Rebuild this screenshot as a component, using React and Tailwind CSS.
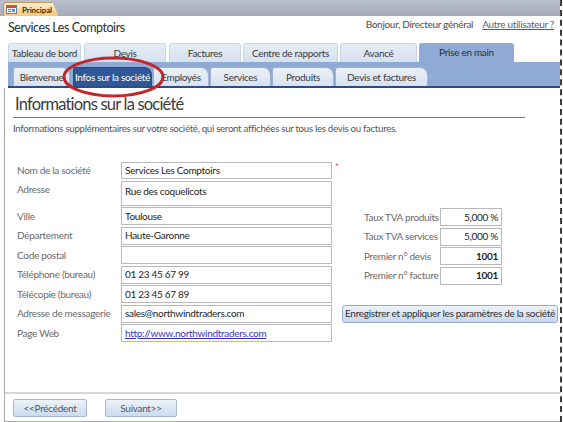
import React from "react";

const mainTabs = [
  { label: "Tableau de bord", cls: "w-[73px]" },
  { label: "Devis", cls: "w-[82px] ml-[3px]" },
  { label: "Factures", cls: "w-[72px] ml-[3px]" },
  { label: "Centre de rapports", cls: "w-[95px] ml-[2px]" },
  { label: "Avancé", cls: "w-[77px] ml-[2px]" },
];

const subTabs = [
  { label: "Bienvenue", cls: "w-[57px]" },
  { label: "Infos sur la société", cls: "w-[79px] ml-[3px]", active: true },
  { label: "Employés", cls: "w-[56px] ml-[1px]" },
  { label: "Services", cls: "w-[61px] ml-[1px]" },
  { label: "Produits", cls: "w-[62px] ml-[1px]" },
  { label: "Devis et factures", cls: "w-[93px] ml-[1px]" },
];

const leftFields = [
  { label: "Nom de la société", value: "Services Les Comptoirs", h: "h-[17px]", star: true },
  { label: "Adresse", value: "Rue des coquelicots", h: "h-[25px]", top: true },
  { label: "Ville", value: "Toulouse", h: "h-[18px]" },
  { label: "Département", value: "Haute-Garonne", h: "h-[18px]" },
  { label: "Code postal", value: "", h: "h-[18px]" },
  { label: "Téléphone (bureau)", value: "01 23 45 67 99", h: "h-[18px]" },
  { label: "Télécopie (bureau)", value: "01 23 45 67 89", h: "h-[18px]" },
  { label: "Adresse de messagerie", value: "sales@northwindtraders.com", h: "h-[18px]" },
  { label: "Page Web", value: "http://www.northwindtraders.com", h: "h-[18px]", link: true },
];

const rightFields = [
  { label: "Taux TVA produits", value: "5,000 %" },
  { label: "Taux TVA services", value: "5,000 %" },
  { label: "Premier n° devis", value: "1001", bold: true },
  { label: "Premier n° facture", value: "1001", bold: true },
];

function FormIcon() {
  return (
    <svg width="11" height="9" viewBox="0 0 11 9" className="shrink-0">
      <rect x="0.5" y="0.5" width="10" height="8" fill="#fff" stroke="#6a7a92" />
      <rect x="1" y="1" width="9" height="2" fill="#d8443a" />
      <rect x="2" y="4" width="3" height="1" fill="#3a6cc0" />
      <rect x="2" y="6" width="3" height="1" fill="#3a6cc0" />
      <rect x="6" y="4" width="3" height="3" fill="#5b8fd6" />
    </svg>
  );
}

function Input({ field }) {
  return (
    <div
      className={`${field.h} w-[211px] border border-[#b9b9b9] bg-white px-[3px] flex ${
        field.top ? "items-start pt-[2px]" : "items-center"
      } text-[10px] text-[#1e1e1e]`}
    >
      {field.link ? (
        <span className="underline text-[#3b35b8]">{field.value}</span>
      ) : (
        field.value
      )}
    </div>
  );
}

export default function App() {
  return (
    <div className="w-[563px] h-[422px] bg-white overflow-hidden whitespace-nowrap font-['Lato','Noto_Sans',sans-serif] tracking-[-0.3px]">
      <div className="relative w-[562px] h-full border-r-2 border-dashed border-[#3c3c3c] flex flex-col">
        {/* title bar with the Principal document tab */}
        <div className="h-[16px] shrink-0 bg-gradient-to-b from-[#b9c0cb] to-[#a4acb8] flex items-end pl-[3px]">
          <div className="h-[14px] w-[56px] rounded-tl-[3px] border border-b-0 border-[#c29b5c] bg-gradient-to-b from-[#fdeecb] to-[#f4c877] [clip-path:polygon(0_0,calc(100%-7px)_0,100%_100%,0_100%)] flex items-center gap-[5px] pl-[2px]">
            <FormIcon />
            <span className="text-[8px] font-bold text-[#3d2b0e] leading-none tracking-[-0.1px]">Principal</span>
          </div>
        </div>

        {/* header */}
        <div className="h-[27px] shrink-0 flex justify-between items-start pl-[8px] pr-[6px]">
          <div className="text-[12.5px] leading-[15px] text-[#2e2e2e] pt-[4px] tracking-[-0.45px]">Services Les Comptoirs</div>
          <div className="flex items-center gap-[9px] pt-[2px] text-[10px] leading-[12px]">
            <span className="text-[#4d4d4d]">Bonjour, Directeur général</span>
            <span className="text-[#4f5f78] underline">Autre utilisateur ?</span>
          </div>
        </div>

        {/* main tabs */}
        <div className="h-[19px] shrink-0 flex items-end pl-[8px]">
          {mainTabs.map((t) => (
            <div
              key={t.label}
              className={`${t.cls} h-[19px] rounded-t-[3px] border border-b-0 border-[#c7d4e5] bg-gradient-to-b from-[#e6edf6] to-[#d6e1ef] flex items-center justify-center text-[10px] text-[#3a3a3a]`}
            >
              {t.label}
            </div>
          ))}
          <div className="w-[95px] ml-[2px] h-[19px] rounded-t-[3px] bg-[#8fabd5] flex items-center justify-center text-[10px] text-[#2f2f2f]">
            Prise en main
          </div>
        </div>

        {/* sub tab band */}
        <div className="h-[26px] shrink-0 ml-[8px] bg-[#8fabd5] border-b-2 border-[#2d4c85] flex items-end pl-[5px]">
          {subTabs.map((t) => (
            <div
              key={t.label}
              className={`${t.cls} h-[19px] rounded-tl-[3px] rounded-tr-[8px] border border-b-0 flex items-center justify-center text-[10px] ${
                t.active
                  ? "bg-[#2e5897] border-[#244a84] text-white"
                  : "bg-gradient-to-b from-[#eaf0f8] to-[#d8e2f0] border-[#9fb3d0] text-[#3a3a3a]"
              }`}
            >
              {t.label}
            </div>
          ))}
        </div>

        {/* content panel */}
        <div className="flex-1 ml-[4px] border-l border-b border-[#a9a9a9] flex flex-col">
          <h1 className="pl-[10px] pt-[6px] text-[16.5px] leading-[20px] text-[#3c3c3c] tracking-[-0.8px]">
            Informations sur la société
          </h1>
          <div className="ml-[8px] mt-[3px] w-[512px] border-t border-[#7d7d7d]" />
          <p className="ml-[8px] mt-[4px] text-[9.7px] leading-[12px] text-[#565656]">
            Informations supplémentaires sur votre société, qui seront affichées sur tous les devis ou factures.
          </p>

          <div className="ml-[12px] mt-[28px] flex">
            <div className="flex flex-col gap-y-[1.5px]">
              {leftFields.map((f) => (
                <div key={f.label} className="flex">
                  <div
                    className={`w-[104px] text-[10px] text-[#6a6a6a] ${f.top ? "pt-[1px]" : "flex items-center"}`}
                  >
                    {f.label}
                  </div>
                  <Input field={f} />
                  <div className="w-[10px] pl-[3px] text-[9px] leading-[10px] text-[#d0406a]">{f.star ? "*" : ""}</div>
                </div>
              ))}
            </div>

            <div className="flex flex-col">
              <div className="h-[46px]" />
              <div className="flex flex-col gap-y-[1.5px]">
                {rightFields.map((f) => (
                  <div key={f.label} className="flex h-[18px]">
                    <div className="w-[98px] pl-[22px] text-[10px] text-[#6a6a6a] flex items-center">{f.label}</div>
                    <div
                      className={`w-[62px] border border-[#b9b9b9] px-[3px] flex items-center justify-end text-[10px] text-[#1e1e1e] ${
                        f.bold ? "font-bold" : ""
                      }`}
                    >
                      {f.value}
                    </div>
                  </div>
                ))}
              </div>
              <div className="h-[20px]" />
              <button className="h-[18px] w-[216px] rounded-[3px] border border-[#93acd0] bg-gradient-to-b from-[#eef3fa] to-[#c7d8ee] text-[10px] text-[#303030] flex items-center justify-center overflow-hidden">
                Enregistrer et appliquer les paramètres de la société
              </button>
            </div>
          </div>

          <div className="mt-auto">
            <div className="h-[2px] bg-[#d6d6d6]" />
            <div className="flex gap-[18px] pl-[8px] pt-[5px] pb-[4px]">
              <button className="h-[18px] w-[74px] rounded-[2px] border border-[#a3b7d4] bg-gradient-to-b from-[#eef3fa] to-[#cbdaee] text-[10px] text-[#555]">
                &lt;&lt;Précédent
              </button>
              <button className="h-[18px] w-[72px] rounded-[2px] border border-[#a3b7d4] bg-gradient-to-b from-[#eef3fa] to-[#cbdaee] text-[10px] text-[#555]">
                Suivant&gt;&gt;
              </button>
            </div>
          </div>
        </div>

        {/* red highlight ellipse drawn over the active sub tab */}
        <svg className="absolute left-[62px] top-[56px] pointer-events-none" width="103" height="42" viewBox="0 0 103 42">
          <ellipse cx="51.5" cy="21" rx="49.5" ry="19" fill="none" stroke="#c1262c" strokeWidth="3" />
        </svg>
      </div>
    </div>
  );
}
